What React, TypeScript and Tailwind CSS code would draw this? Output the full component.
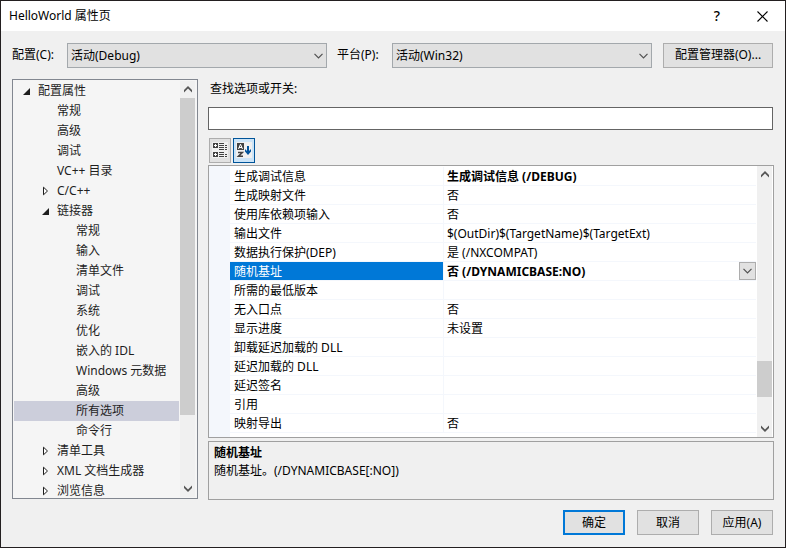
import React from 'react';
import clsx from 'clsx';

type TreeNode = {
    label: string;
    level: number;
    state?: 'open' | 'closed';
    selected?: boolean;
};

type Property = {
    name: string;
    value?: string;
    changed?: boolean;
    selected?: boolean;
};

const tree: TreeNode[] = [
    { label: '配置属性', level: 0, state: 'open' },
    { label: '常规', level: 1 },
    { label: '高级', level: 1 },
    { label: '调试', level: 1 },
    { label: 'VC++ 目录', level: 1 },
    { label: 'C/C++', level: 1, state: 'closed' },
    { label: '链接器', level: 1, state: 'open' },
    { label: '常规', level: 2 },
    { label: '输入', level: 2 },
    { label: '清单文件', level: 2 },
    { label: '调试', level: 2 },
    { label: '系统', level: 2 },
    { label: '优化', level: 2 },
    { label: '嵌入的 IDL', level: 2 },
    { label: 'Windows 元数据', level: 2 },
    { label: '高级', level: 2 },
    { label: '所有选项', level: 2, selected: true },
    { label: '命令行', level: 2 },
    { label: '清单工具', level: 1, state: 'closed' },
    { label: 'XML 文档生成器', level: 1, state: 'closed' },
    { label: '浏览信息', level: 1, state: 'closed' },
];

const properties: Property[] = [
    { name: '生成调试信息', value: '生成调试信息 (/DEBUG)', changed: true },
    { name: '生成映射文件', value: '否' },
    { name: '使用库依赖项输入', value: '否' },
    { name: '输出文件', value: '$(OutDir)$(TargetName)$(TargetExt)' },
    { name: '数据执行保护(DEP)', value: '是 (/NXCOMPAT)' },
    { name: '随机基址', value: '否 (/DYNAMICBASE:NO)', changed: true, selected: true },
    { name: '所需的最低版本' },
    { name: '无入口点', value: '否' },
    { name: '显示进度', value: '未设置' },
    { name: '卸载延迟加载的 DLL' },
    { name: '延迟加载的 DLL' },
    { name: '延迟签名' },
    { name: '引用' },
    { name: '映射导出', value: '否' },
];

const indent = ['pl-1', 'pl-[23px]', 'pl-[42px]'];

const Chevron = ({ className }: { className?: string }) => (
    <svg viewBox="0 0 9 6" className={clsx('h-[6px] w-[9px]', className)} fill="none" stroke="#505050" strokeWidth="1.2">
        <path d="M0.5 0.8 L4.5 4.8 L8.5 0.8" />
    </svg>
);

const ScrollArrow = ({ up }: { up?: boolean }) => (
    <button type="button" aria-label={up ? '向上滚动' : '向下滚动'} className="flex h-[17px] shrink-0 items-center justify-center">
        <svg viewBox="0 0 8 7" className={clsx('h-[7px] w-2', up && 'rotate-180')} fill="#555555">
            <path d="M0 0.5 L4 4.5 L8 0.5 V3 L4 7 L0 3 Z" />
        </svg>
    </button>
);

const Combo = ({ id, label, value }: { id: string; label: string; value: string }) => (
    <>
        <label htmlFor={id} className="w-[45px] shrink-0">{label}</label>
        <div className="relative mt-px flex-1">
            <select id={id} className="block h-[25px] w-full appearance-none border border-[#a3a8ac] bg-[#e1e1e1] px-[3px]">
                <option>{value}</option>
            </select>
            <Chevron className="pointer-events-none absolute right-1 top-[10px]" />
        </div>
    </>
);

const TreeRow = ({ label, level, state, selected }: TreeNode) => (
    <li
        role="treeitem"
        aria-selected={!!selected}
        aria-expanded={state ? state === 'open' : undefined}
        className={clsx('flex h-5 items-center whitespace-nowrap', indent[level], selected && 'bg-[#cccedb]')}
    >
        <span className="flex w-5 shrink-0 items-center pl-[5px]">
            {state === 'open' && (
                <svg viewBox="0 0 7 7" className="size-[7px]"><path d="M7 0 V7 H0 Z" fill="#1e1e1e" /></svg>
            )}
            {state === 'closed' && (
                <svg viewBox="0 0 7 10" className="h-[10px] w-[7px]"><path d="M1.5 1.2 V8.8 L5.5 5 Z" fill="#fff" stroke="#1e1e1e" /></svg>
            )}
        </span>
        {label}
    </li>
);

const PropertyRow = ({ name, value, changed, selected }: Property) => (
    <tr className="h-[19px] leading-4">
        <th
            scope="row"
            className={clsx(
                'border-b border-r border-[#f4f7fc] p-0 pl-1 pt-[2px] text-left font-normal',
                selected && 'bg-[#0078d7] text-white',
            )}
        >
            {name}
        </th>
        <td className={clsx('border-b border-[#f4f7fc] p-0 pl-[3px]', changed && 'font-bold')}>
            <div className="flex h-[18px] items-center justify-between">
                <span className="pt-[2px]">{value}</span>
                {selected && (
                    <button type="button" aria-label="打开列表" className="flex h-[18px] w-[17px] items-center justify-center border border-[#adadad] bg-[#e1e1e1]">
                        <Chevron />
                    </button>
                )}
            </div>
        </td>
    </tr>
);

const toolButton = 'flex h-[25px] w-[22px] justify-center pt-[3px]';
const dialogButton = 'h-[25px] w-[62px] bg-[#e1e1e1]';

const App = () => {
    return (
        <main className="flex h-screen flex-col border border-[#231f20] bg-[#f0f0f0] font-['Noto_Sans','Noto_Sans_CJK_SC',sans-serif] text-[12px] leading-[18px] text-black">
            <header className="flex h-[30px] shrink-0 items-center bg-white pl-2 pr-[17px]">
                <h1 className="flex-1">HelloWorld 属性页</h1>
                <button type="button" aria-label="帮助" className="mr-[34px] w-3 text-[14px] font-medium">?</button>
                <button type="button" aria-label="关闭">
                    <svg viewBox="0 0 11 11" className="size-[11px]" stroke="#000" strokeWidth="1.1">
                        <path d="M0.5 0.5 L10.5 10.5 M10.5 0.5 L0.5 10.5" />
                    </svg>
                </button>
            </header>

            <div className="flex min-h-0 flex-1 flex-col px-[11px] pb-3 pt-[11px]">
                <div className="flex shrink-0 items-center gap-[10px] pr-px">
                    <Combo id="configuration" label="配置(C):" value="活动(Debug)" />
                    <Combo id="platform" label="平台(P):" value="活动(Win32)" />
                    <button type="button" className="ml-px h-[25px] w-[110px] border border-[#adadad] bg-[#e1e1e1]">
                        配置管理器(O)...
                    </button>
                </div>

                <div className="mt-[11px] flex min-h-0 flex-1 gap-[10px]">
                    <nav aria-label="配置属性" className="mb-px flex w-[186px] shrink-0 border border-[#828790] bg-[#f5f5f5] p-px">
                        <ul role="tree" className="min-w-0 flex-1 overflow-hidden text-[#1e1e1e]">
                            {tree.map((node, i) => (
                                <TreeRow key={i} {...node} />
                            ))}
                        </ul>
                        <div className="mx-px flex w-[15px] flex-col bg-[#f0f0f0]">
                            <ScrollArrow up />
                            <div className="flex-1">
                                <div className="h-[83%] bg-[#cdcdcd]" />
                            </div>
                            <ScrollArrow />
                        </div>
                    </nav>

                    <section className="flex min-w-0 flex-1 flex-col">
                        <label htmlFor="search" className="pl-[2px] pt-px">查找选项或开关:</label>
                        <input id="search" type="text" className="mr-px mt-[9px] h-[23px] shrink-0 border border-[#646464] bg-white px-1" />

                        <div className="flex shrink-0 gap-[2px] px-px pb-[2px] pt-2">
                            <button type="button" aria-label="按类别" className={clsx(toolButton, 'border border-[#adadad] bg-[#e1e1e1]')}>
                                <svg viewBox="0 0 16 16" className="size-4 shrink-0 bg-[#f0f0f0]" shapeRendering="crispEdges">
                                    <path fill="#424242" d="M1 1h5v5H1z M1 10h5v5H1z M7 1h5v1H7z M7 3h5v1H7z M7 5h5v1H7z M7 7h5v1H7z M7 10h5v1H7z M7 12h5v1H7z M7 14h5v1H7z M13 3h2v1h-2z M13 5h2v1h-2z M13 7h2v1h-2z M13 12h2v1h-2z M13 14h2v1h-2z" />
                                    <path fill="#fff" d="M3 2h1v3H3z M2 3h3v1H2z M3 11h1v3H3z M2 12h3v1H2z" />
                                </svg>
                            </button>
                            <button type="button" aria-label="按字母顺序" aria-pressed="true" className={clsx(toolButton, 'border border-[#005499] bg-[#cce4f7]')}>
                                <svg viewBox="0 0 16 16" className="size-4 shrink-0 bg-[#f0f0f0]">
                                    <path fill="#424242" d="M1 1h7v7H1z" />
                                    <path fill="none" stroke="#fff" d="M2.5 7 L4.5 2.2 L6.5 7 M3 5.5h3" />
                                    <path fill="none" stroke="#424242" strokeWidth="1.6" d="M2 10.5H6.3L2.5 14.3H7" />
                                    <path fill="#00539c" d="M11 4h2v5l2-2v2.5L12 13L9 9.5V7l2 2z" />
                                </svg>
                            </button>
                        </div>

                        <div className="flex min-h-0 flex-1 overflow-hidden border border-[#a0a0a0] bg-white">
                            <div className="w-[21px] shrink-0 bg-[#f4f7fc]" />
                            <div className="min-w-0 flex-1 overflow-hidden">
                                <table aria-label="所有选项" className="w-full table-fixed border-separate border-spacing-0 whitespace-nowrap pt-px">
                                    <colgroup>
                                        <col className="w-[214px]" />
                                        <col />
                                    </colgroup>
                                    <tbody>
                                        {properties.map((property) => (
                                            <PropertyRow key={property.name} {...property} />
                                        ))}
                                    </tbody>
                                </table>
                            </div>
                            <div className="mx-px flex w-[15px] shrink-0 flex-col bg-[#f0f0f0]">
                                <ScrollArrow up />
                                <div className="flex flex-1 flex-col justify-end pb-[23px]">
                                    <div className="h-9 bg-[#cdcdcd]" />
                                </div>
                                <ScrollArrow />
                            </div>
                        </div>

                        <div className="mt-[3px] h-[59px] shrink-0 border border-[#a0a0a0] px-[5px] pt-[2px]">
                            <h2 className="font-bold">随机基址</h2>
                            <p>随机基址。(/DYNAMICBASE[:NO])</p>
                        </div>
                    </section>
                </div>

                <footer className="mt-[10px] flex shrink-0 justify-end gap-3 pr-px">
                    <button type="button" className={clsx(dialogButton, 'border-2 border-[#0078d7]')}>确定</button>
                    <button type="button" className={clsx(dialogButton, 'border border-[#adadad]')}>取消</button>
                    <button type="button" className={clsx(dialogButton, 'border border-[#adadad]')}>应用(A)</button>
                </footer>
            </div>
        </main>
    );
};

export default App;
